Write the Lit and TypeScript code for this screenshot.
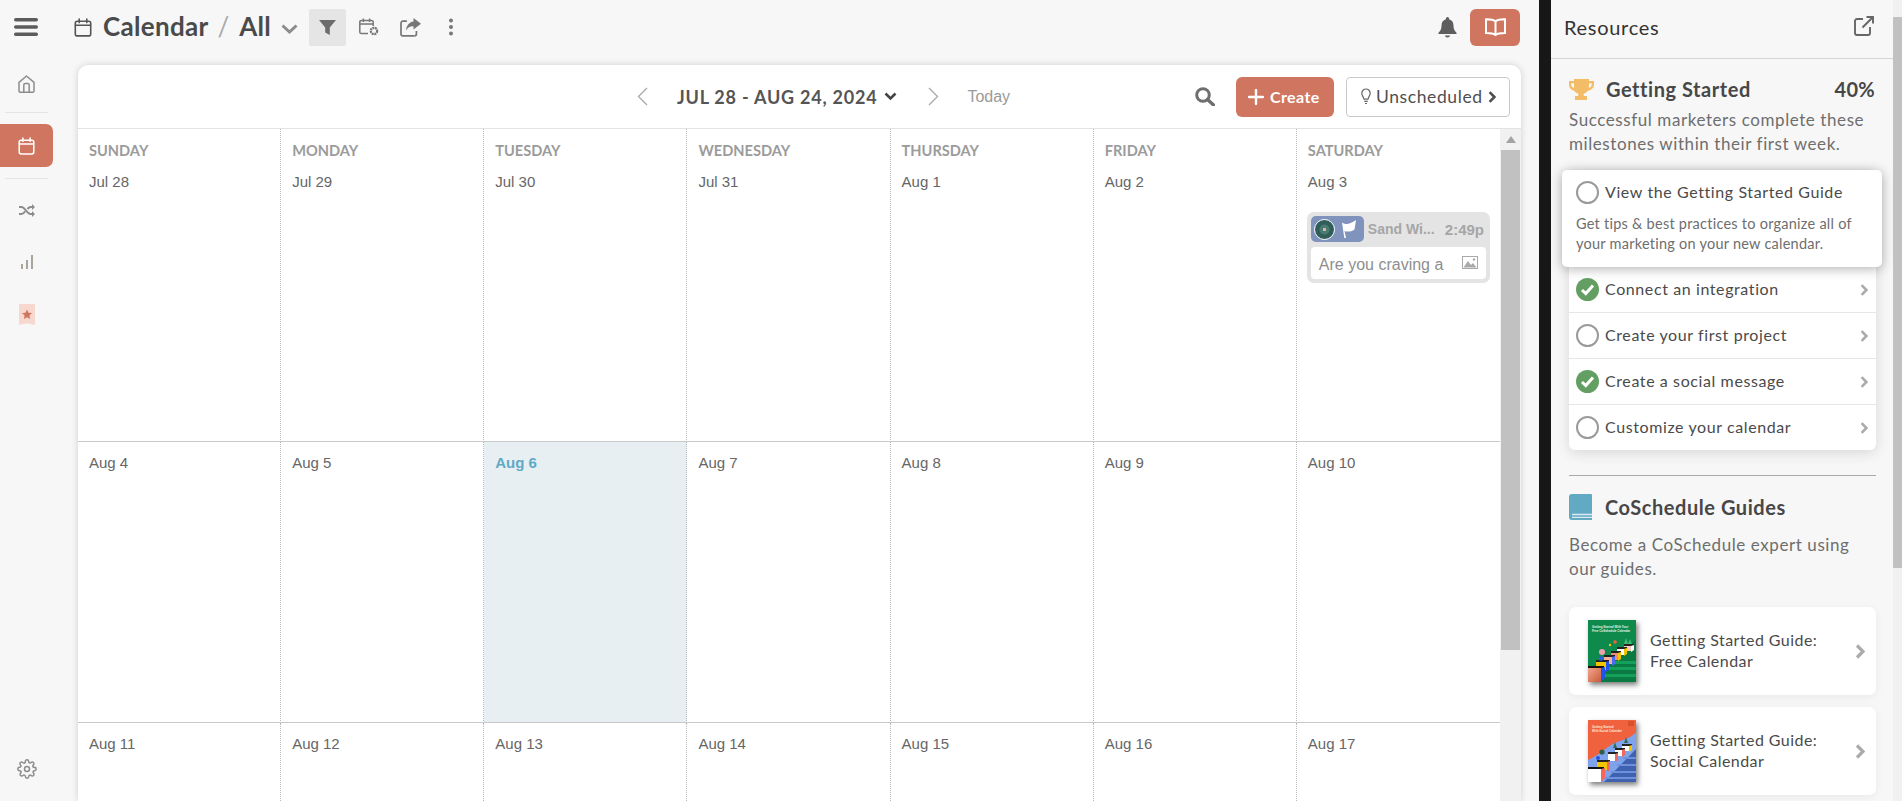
import { LitElement, html, css, svg } from "lit";
import { customElement } from "lit/decorators.js";

const ic = (w: number, h: number, vb: string, body: unknown, cls = "") =>
  html`<svg class="ic ${cls}" width=${w} height=${h} viewBox=${vb} aria-hidden="true">${body}</svg>`;

const calIcon = (w: number, h: number) =>
  ic(w, h, "0 0 18 19", svg`<g fill="none" stroke="currentColor" stroke-width="1.6" stroke-linecap="round"><rect x="1.3" y="3.3" width="15.4" height="14.6" rx="2"/><path d="M1.5 7.3h15M5.2 1v3.6M12.8 1v3.6"/></g>`);

const chev = (w: number, h: number, cls = "") =>
  ic(w, h, "0 0 8 12", svg`<path d="M1.6 1.2 6.4 6 1.6 10.8" fill="none" stroke="currentColor" stroke-width="2.6"/>`, cls);

const emptyCircle = html`<span class="circle"></span>`;
const doneCircle = html`<span class="circle done">${ic(15, 13, "0 0 15 13", svg`<path d="M2 7l3.8 3.6L13 2.6" fill="none" stroke="#fff" stroke-width="3"/>`)}</span>`;

const thumbGreen = html`<svg class="thumb" width="48" height="62" viewBox="0 0 48 62" aria-hidden="true">
  <defs><linearGradient id="gp" x1="0" y1="0" x2="1" y2="1"><stop offset="0" stop-color="#f3a68c"/><stop offset="1" stop-color="#c85a3c"/></linearGradient></defs>
  <rect width="48" height="62" fill="#0e8a4d"/>
  <path d="M0 62V49L48 20V62Z" fill="#0b7a42"/>
  <g fill="#14a05a"><path d="M26 41h22v3H21ZM18 47h30v3H13ZM12 54h36v3H10Z"/></g>
  <text x="4" y="8" font-size="3" font-weight="700" fill="#e6f5ea" font-family="Liberation Sans">Getting Started With Your</text>
  <text x="4" y="12" font-size="3" font-weight="700" fill="#e6f5ea" font-family="Liberation Sans">Free CoSchedule Calendar</text>
  <path d="M36 24h10v2H36Z" fill="#222"/><path d="M36 26h7v5h-7Z" fill="#f6c9b8"/><path d="M43 26l3-1v5l-3 2Z" fill="#fff"/>
  <path d="M29 27h10v2H29Z" fill="#222"/><path d="M29 29h7v6h-7Z" fill="#fff"/><path d="M36 29l3-1v6l-3 2Z" fill="#f4c400"/>
  <path d="M23 31h10v2H23Z" fill="#222"/><path d="M23 33h7v7h-7Z" fill="#f08a7a"/><path d="M30 33l3-1v7l-3 2Z" fill="#f4c400"/>
  <path d="M16 35h11v2H16Z" fill="#222"/><path d="M16 37h8v7h-8Z" fill="#f6b09c"/><path d="M24 37l3-1v8l-3 2Z" fill="#4a6cf0"/>
  <path d="M8 40h13v2H8Z" fill="#222"/><path d="M8 42h10v8H8Z" fill="#f4c400"/><path d="M18 42l3-1v9l-3 2Z" fill="#1f55e8"/>
  <path d="M0 46h16v2H0Z" fill="#111"/><path d="M0 48h13v14H0Z" fill="url(#gp)"/><path d="M13 48l4-1v11l-4 4Z" fill="#1f55e8"/>
  <circle cx="14" cy="32" r="3" fill="#f2a0b0"/><circle cx="13" cy="38.500" r="2.200" fill="#2a60e0"/>
  <circle cx="27" cy="22" r="1.800" fill="#f0643c"/><circle cx="22" cy="25" r="1.200" fill="#f4c400"/><path d="M36 24l2-6 2 6ZM40 24l2-5 2 5Z" fill="#3fbf74"/>
</svg>`;

const thumbOrange = html`<svg class="thumb" width="48" height="62" viewBox="0 0 48 62" aria-hidden="true">
  <rect width="48" height="62" fill="#f0623e"/>
  <path d="M0 40C14 34 20 24 32 21 38 19 44 17 48 12V62H0Z" fill="#7fa2ec"/>
  <path d="M16 62 48 29V62Z" fill="#3f62b0"/>
  <g fill="#6f90dc"><path d="M36 37h12v2H34ZM30 44h18v2H28ZM24 51h24v2H22ZM18 57h30v2H16Z"/></g>
  <text x="4" y="8" font-size="3" font-weight="700" fill="#ffe9df" font-family="Liberation Sans">Getting Started</text>
  <text x="4" y="12" font-size="3" font-weight="700" fill="#ffe9df" font-family="Liberation Sans">With Social Calendar</text>
  <rect x="40" y="1" width="6" height="5" fill="#d8502e"/>
  <path d="M34 24h10v2H34Z" fill="#222"/><path d="M34 26h7v5h-7Z" fill="#fff"/><path d="M41 26l3-1v5l-3 2Z" fill="#f4c400"/>
  <path d="M27 28h10v2H27Z" fill="#222"/><path d="M27 30h7v6h-7Z" fill="#fff"/><path d="M34 30l3-1v6l-3 2Z" fill="#f4685c"/>
  <path d="M20 32h10v2H20Z" fill="#222"/><path d="M20 34h7v7h-7Z" fill="#fff"/><path d="M27 34l3-1v7l-3 2Z" fill="#f4685c"/>
  <path d="M9 40h13v2H9Z" fill="#222"/><path d="M9 42h10v8H9Z" fill="#f4c400"/><path d="M19 42l3-1v9l-3 2Z" fill="#f4685c"/>
  <path d="M0 47h16v2H0Z" fill="#111"/><path d="M0 49h13v13H0Z" fill="#fff"/><path d="M13 49l4-1v10l-4 4Z" fill="#f4685c"/>
  <circle cx="14" cy="32" r="2.600" fill="#2f5f4a"/><circle cx="10" cy="38" r="2" fill="#2a50e0"/>
  <path d="M25 28l2-6 2 6ZM36 23l2-6 2 6Z" fill="#2f6d55"/>
</svg>`;

const weeks = [
  ["Jul 28", "Jul 29", "Jul 30", "Jul 31", "Aug 1", "Aug 2", "Aug 3"],
  ["Aug 4", "Aug 5", "Aug 6", "Aug 7", "Aug 8", "Aug 9", "Aug 10"],
  ["Aug 11", "Aug 12", "Aug 13", "Aug 14", "Aug 15", "Aug 16", "Aug 17"],
];
const days = ["SUNDAY", "MONDAY", "TUESDAY", "WEDNESDAY", "THURSDAY", "FRIDAY", "SATURDAY"];

@customElement("app-root")
export class AppRoot extends LitElement {
  static styles = css`
    :host { display: block; height: 100vh; overflow: hidden; font-family: Lato, "Open Sans", sans-serif; color: #4a4a4a; }
    * { box-sizing: border-box; }
    .ic { display: block; flex: none; }
    .app { display: flex; height: 801px; background: #f7f7f7; }
    .main { width: 1539px; flex: none; display: flex; flex-direction: column; }
    .gutter { width: 12px; flex: none; background: #171717; }
    .aside { width: 342px; flex: none; height: 801px; overflow: hidden; }
    .pagebar { width: 9px; flex: none; background: #f1f1f1; padding-top: 17px; }
    .pagebar div { height: 551px; background: #c1c1c1; }

    .top { height: 65px; flex: none; display: flex; align-items: center; padding: 0 19px 11px 14px; color: #4a4a4a; }
    .burger { color: #5c5c5c; margin-right: 36px; }
    .crumbcal { color: #555; margin-right: 11px; }
    .title { font-size: 26px; font-weight: 700; letter-spacing: .3px; line-height: 37px; color: #4a4a4a; margin-top: -2px; }
    .slash { font-size: 26px; color: #aaa; margin: -2px 10px 0 9px; line-height: 37px; font-weight: 400; }
    .drop { color: #8c8c8c; margin: 3px 11px 0 10px; }
    .filter { width: 37px; height: 37px; background: #e5e5e5; border-radius: 2px; display: flex; align-items: center; justify-content: center; color: #6c6c6c; margin-right: 13px; }
    .topi { color: #777; }
    .g21 { width: 21px; flex: none; }
    .g27 { width: 27px; flex: none; }
    .spacer { flex: 1; }
    .bell { color: #5e5e5e; margin-right: 13px; }
    .bookbtn { width: 50px; height: 37px; background: #d07660; border-radius: 6px; color: #fff; display: flex; align-items: center; justify-content: center; }

    .body { flex: 1; display: flex; min-height: 0; }
    .side { width: 78px; flex: none; display: flex; flex-direction: column; color: #8d8d8d; padding-right: 25px; }
    .side-i { display: flex; justify-content: center; }
    .s-home { padding-top: 10px; height: 47px; }
    .s-shuf { padding-top: 25px; height: 76px; }
    .s-bars { height: 49px; color: #a9a49c; }
    .side-g { height: 11px; flex: none; }
    .side-d { height: 1px; background: #e4e4e4; margin: 0 5px; }
    .side-on { height: 43px; background: #d07660; border-radius: 0 7px 7px 0; color: #fff; display: flex; align-items: center; justify-content: center; }
    .gear { margin-top: auto; margin-bottom: 22px; }

    .panel { width: 1443px; flex: none; background: #fff; border-radius: 10px 10px 0 0; box-shadow: 0 0 7px rgba(0,0,0,.16); display: flex; flex-direction: column; }
    .bar { height: 64px; flex: none; border-bottom: 1px solid #e3e3e3; display: flex; align-items: center; padding: 0 11px 0 559px; }
    .nav { color: #a8a8a8; }
    .range { font-size: 18px; font-weight: 700; color: #555; margin-left: 29px; letter-spacing: .77px; white-space: nowrap; }
    .rdrop { color: #444; margin: 0 31px 0 7px; }
    .today { font-family: "Liberation Sans", sans-serif; font-size: 16px; color: #9a9a9a; margin-left: 28px; }
    .search { color: #6e6e6e; margin-right: 21px; }
    .create { width: 98px; height: 40px; border-radius: 6px; background: #d07660; color: #fff; display: flex; align-items: center; padding-left: 12px; font-size: 16px; font-weight: 700; letter-spacing: .4px; gap: 6px; margin-right: 12px; }
    .unsched { width: 164px; height: 40px; border: 1px solid #c9c9c9; border-radius: 4px; display: flex; align-items: center; padding-left: 14px; font-size: 17.5px; letter-spacing: .6px; color: #4f4f4f; background: #fff; white-space: nowrap; }
    .bulb { margin-right: 5px; color: #666; }
    .unchev { color: #4f4f4f; margin-left: 5px; }

    .cal { flex: 1; display: flex; min-height: 0; }
    .grid { flex: 1; display: grid; grid-template-columns: repeat(7, 1fr); grid-template-rows: 313px 281px 1fr; }
    .bar-r { width: 21px; flex: none; background: #f1f1f1; position: relative; padding: 21px 1px 0; }
    .bar-r .thumbv { height: 500px; background: #c1c1c1; }
    .bar-r .up { position: absolute; top: 7px; left: 6px; width: 0; height: 0; border: 5px solid transparent; border-bottom: 7px solid #a3a3a3; border-top: 0; }
    .cell { border-right: 1px dotted #b9b9b9; border-bottom: 1px solid #c9c9c9; padding: 13px 11px 0; min-width: 0; font-family: "Liberation Sans", sans-serif; }
    .cell.last { border-right: 0; }
    .cell.r3 { border-bottom: 0; }
    .cell.now { background: #e7eff2; }
    .wk { font-family: Lato, sans-serif; font-size: 14.6px; font-weight: 700; color: #9b9b9b; line-height: 18px; margin: 0 0 14px; }
    .date { font-size: 15px; line-height: 16px; color: #666; padding-left: 0; }
    .now .date { font-weight: 700; color: #5eaac6; }
    .ev { margin: 22px -1px 0; height: 71px; background: #e4e4e4; border-radius: 7px; padding: 4px; }
    .ev-top { display: flex; align-items: center; height: 26px; }
    .chip { width: 53px; height: 26px; border-radius: 5px; background: #7f93bd; display: flex; align-items: center; padding-left: 3px; gap: 6px; flex: none; }
    .avatar { width: 21px; height: 21px; border-radius: 50%; border: 1.5px solid #fff; background: radial-gradient(circle, #d7b7a5 0 12%, #4a7a72 14% 35%, #2f5d58 40%); flex: none; }
    .ev-name { font-family: "Liberation Sans", sans-serif; font-size: 14px; font-weight: 700; color: #a6a6a6; margin-left: 4px; white-space: nowrap; flex: 1; }
    .ev-time { font-family: "Liberation Sans", sans-serif; font-size: 15px; font-weight: 700; color: #a6a6a6; margin-right: 2px; }
    .ev-box { margin-top: 5px; height: 32px; border-radius: 4px; background: #fff; display: flex; align-items: center; padding: 3px 8px 0; justify-content: space-between; font-size: 16px; color: #8e8e8e; }
    .ev-img { color: #a9a9a9; margin-top: -4px; }

    .rhead { height: 59px; border-bottom: 1px solid #d4d4d4; display: flex; align-items: center; justify-content: space-between; padding: 0 19px 5px 13px; font-size: 20px; letter-spacing: .7px; color: #333; }
    .rext { color: #666; margin-top: -2px; }
    .sec { padding: 0 17px 0 18px; }
    .h { display: flex; align-items: center; }
    .h1 { height: 24px; margin-top: 18px; }
    .htext { font-size: 20px; font-weight: 700; color: #474747; margin-left: 13px; letter-spacing: .55px; }
    .h1 .htext { margin-left: 12px; }
    .pct { margin-left: auto; font-size: 20px; font-weight: 700; color: #474747; margin-right: 1px; letter-spacing: .3px; }
    .desc { font-size: 17px; line-height: 24px; color: #6e6e6e; margin: 7px 0 0 0; letter-spacing: .58px; }
    .check { position: relative; margin-top: 14px; }
    .pop { position: absolute; left: -7px; right: -6px; top: 0; height: 97px; background: #fff; border-radius: 5px; box-shadow: 0 2px 12px rgba(0,0,0,.3); padding: 11px 14px 0; }
    .pop-t { display: flex; align-items: center; gap: 6px; font-size: 16px; color: #4a4a4a; letter-spacing: .6px; }
    .pop-t span + span { margin-top: -2px; }
    .pop-d { margin: 10px 0 0; font-size: 14.5px; line-height: 20px; color: #6e6e6e; letter-spacing: .25px; }
    .list { background: #fff; border-radius: 6px; padding-top: 97px; box-shadow: 0 3px 14px rgba(0,0,0,.13); }
    .row { height: 46px; border-bottom: 1px solid #e6e6e6; display: flex; align-items: center; padding: 0 8px 0 7px; gap: 6px; font-size: 16px; color: #4a4a4a; letter-spacing: .6px; }
    .row span + span { margin-top: -2px; }
    .row:last-child { border-bottom: 0; height: 45px; }
    .row .go { margin-left: auto; color: #ababab; }
    .circle { width: 23px; height: 23px; border-radius: 50%; border: 2px solid #9a9a9a; flex: none; display: flex; align-items: center; justify-content: center; }
    .circle.done { background: #639f63; border: 0; }
    .hr { height: 1px; background: #aaa; margin-top: 25px; }
    .h2 { height: 26px; margin-top: 18px; }
    .d2 { margin-top: 13px; }
    .cards { margin-top: 26px; display: flex; flex-direction: column; gap: 12px; }
    .card { height: 88px; background: #fff; border-radius: 7px; box-shadow: 0 2px 10px rgba(0,0,0,.06); display: flex; align-items: center; padding: 0 11px 0 19px; }
    .thumb { display: block; flex: none; box-shadow: 2px 3px 5px rgba(0,0,0,.5); }
    .card-t { margin: -2px 0 0 14px; font-size: 16px; line-height: 21px; color: #4a4a4a; flex: 1; letter-spacing: .45px; }
    .card .go { color: #ababab; }
  `;

  render() {
    return html`<div class="app">
      <div class="main">
        <header class="top">
          ${ic(24, 18, "0 0 24 18", svg`<g fill="currentColor"><rect width="24" height="3.4" rx="1.7"/><rect y="7.3" width="24" height="3.4" rx="1.7"/><rect y="14.6" width="24" height="3.4" rx="1.7"/></g>`, "burger")}
          <span class="crumbcal">${calIcon(18, 19)}</span>
          <span class="title">Calendar</span><span class="slash">/</span><span class="title">All</span>
          ${ic(17, 10, "0 0 17 10", svg`<path d="M1.5 1.5 8.5 8l7-6.5" fill="none" stroke="currentColor" stroke-width="3"/>`, "drop")}
          <span class="filter">${ic(17, 15, "0 0 17 15", svg`<path d="M0 0h17l-6.2 7.4V15L6.2 12.6V7.4Z" fill="currentColor"/>`)}</span>
          ${ic(20, 18, "0 0 20 18", svg`<g fill="none" stroke="currentColor" stroke-width="1.5"><path d="M9 15.5H2.4a1.6 1.6 0 0 1-1.6-1.6V4a1.6 1.6 0 0 1 1.6-1.6h10.2A1.6 1.6 0 0 1 14.2 4v4M1 6h13M4.4 .5v3.4M10.6 .5v3.4"/></g><circle cx="15" cy="13" r="3.2" fill="none" stroke="currentColor" stroke-width="2.2" stroke-dasharray="2 .6"/>`, "topi")}
          <span class="g21"></span>
          ${ic(21, 19, "0 0 21 19", svg`<path d="M14.5 17.8H2.9A1.9 1.9 0 0 1 1 15.9V5.1a1.9 1.9 0 0 1 1.9-1.9h4" fill="none" stroke="currentColor" stroke-width="1.7"/><path d="M14.5 17.8a1.9 1.9 0 0 0 1.9-1.9v-3" fill="none" stroke="currentColor" stroke-width="1.7"/><path d="M13.5 0 21 5.8l-7.5 5.8V8.2C10 8.1 7.6 9.5 6 12.6 6.2 8 9 3.9 13.5 3.4Z" fill="currentColor"/>`, "topi")}
          <span class="g27"></span>
          ${ic(6, 18, "0 0 6 18", svg`<g fill="currentColor"><circle cx="3" cy="2.5" r="2"/><circle cx="3" cy="9" r="2"/><circle cx="3" cy="15.5" r="2"/></g>`, "topi")}
          <span class="spacer"></span>
          ${ic(19, 21, "0 0 19 21", svg`<path d="M9.5 0a1.6 1.6 0 0 1 1.6 1.6v.7c3 .8 4.4 3.3 4.4 6.4 0 3.4 1 5.2 3 7V17H.5v-1.3c2-1.8 3-3.6 3-7 0-3.1 1.4-5.6 4.4-6.4v-.7A1.6 1.6 0 0 1 9.5 0ZM6.8 18.4h5.4a2.8 2.8 0 0 1-5.4 0Z" fill="currentColor"/>`, "bell")}
          <span class="bookbtn">${ic(21, 19, "0 0 21 19", svg`<g fill="none" stroke="currentColor" stroke-width="2"><path d="M10.5 3.4C8.6 1.8 5.500 1.200 1 1.300v13.700c4.500 0 7.600.4 9.500 2 1.900-1.600 5-2 9.500-2V1.300c-4.500-.1-7.600.5-9.500 2.100Zm0 0V17"/></g>`)}</span>
        </header>
        <div class="body">
          <nav class="side">
            <div class="side-i s-home">${ic(17, 18, "0 0 17 18", svg`<g fill="none" stroke="currentColor" stroke-width="1.5" stroke-linejoin="round"><path d="M1 7.400 8.500 1 16 7.400V16a1.300 1.300 0 0 1-1.300 1.300H2.300A1.300 1.300 0 0 1 1 16Z"/><path d="M5.800 17.200V10a1.500 1.500 0 0 1 1.500-1.500h2.400a1.500 1.500 0 0 1 1.500 1.500v7.200"/></g>`)}</div>
            <div class="side-d"></div>
            <div class="side-g"></div>
            <div class="side-on">${calIcon(17, 18)}</div>
            <div class="side-g"></div>
            <div class="side-d"></div>
            <div class="side-i s-shuf">${ic(16, 13, "0 0 16 13", svg`<g fill="none" stroke="currentColor" stroke-width="2"><path d="M0 3h2.500c3.500 0 5.500 7 9 7H14M0 10h2.500c1.500 0 2.600-1.200 3.700-2.600M8.500 5c.9-1.100 1.800-2 3-2H14"/></g><path d="M13 0l3 3-3 3ZM13 7l3 3-3 3Z" fill="currentColor"/>`)}</div>
            <div class="side-i s-bars">${ic(12, 14, "0 0 12 14", svg`<g fill="currentColor"><rect y="9" width="2" height="5"/><rect x="5" y="5" width="2" height="9"/><rect x="10" width="2" height="14"/></g>`)}</div>
            <div class="side-i">${ic(16, 21, "0 0 16 21", svg`<path d="M0 0h16v21l-8-1.800L0 21Z" fill="#f6d8ce"/><path d="M8 5.500 9.500 8.700l3.500.4-2.600 2.400.7 3.500L8 13.300 4.900 15l.7-3.500L3 9.100l3.500-.4Z" fill="#d07660"/>`)}</div>
            <div class="side-i gear">${ic(20, 20, "0 0 24 24", svg`<g fill="none" stroke="currentColor" stroke-width="1.800" stroke-linejoin="round"><circle cx="12" cy="12" r="3"/><path d="M19.400 15a1.650 1.650 0 0 0 .33 1.820l.06.06a2 2 0 1 1-2.830 2.830l-.06-.06a1.650 1.650 0 0 0-2.800 1.170V21a2 2 0 0 1-4 0v-.09A1.650 1.650 0 0 0 9 19.400a1.650 1.650 0 0 0-1.820.33l-.06.06a2 2 0 1 1-2.830-2.830l.06-.06A1.650 1.650 0 0 0 3 14H3a2 2 0 0 1 0-4h.09A1.650 1.650 0 0 0 4.600 9a1.650 1.650 0 0 0-.33-1.820l-.06-.06a2 2 0 1 1 2.830-2.830l.06.06A1.650 1.650 0 0 0 10 3V3a2 2 0 0 1 4 0v.09a1.650 1.650 0 0 0 2.800 1.170l.06-.06a2 2 0 1 1 2.830 2.830l-.06.06A1.650 1.650 0 0 0 21 10h0a2 2 0 0 1 0 4h-.09a1.650 1.650 0 0 0-1.510 1Z"/></g>`)}</div>
          </nav>
          <section class="panel">
            <div class="bar">
              ${ic(11, 19, "0 0 11 19", svg`<path d="M10 1 1.500 9.500 10 18" fill="none" stroke="currentColor" stroke-width="1.300"/>`, "nav")}
              <span class="range">JUL 28 - AUG 24, 2024</span>
              ${ic(13, 9, "0 0 13 9", svg`<path d="M1.500 1.500 6.500 6.500l5-5" fill="none" stroke="currentColor" stroke-width="2.600"/>`, "rdrop")}
              ${ic(11, 19, "0 0 11 19", svg`<path d="M1 1l8.500 8.500L1 18" fill="none" stroke="currentColor" stroke-width="1.300"/>`, "nav")}
              <span class="today">Today</span>
              <span class="spacer"></span>
              ${ic(20, 19, "0 0 20 19", svg`<circle cx="8" cy="8" r="6.300" fill="none" stroke="currentColor" stroke-width="3"/><path d="M12.500 12.500 18.500 18" stroke="currentColor" stroke-width="3.400" stroke-linecap="round"/>`, "search")}
              <span class="create">${ic(16, 16, "0 0 16 16", svg`<path d="M8 1v14M1 8h14" stroke="currentColor" stroke-width="2.400" stroke-linecap="round"/>`)}Create</span>
              <span class="unsched">
                ${ic(10, 17, "0 0 10 17", svg`<path d="M5 1a4.200 4.200 0 0 0-4.200 4.200c0 2.300 1.700 3.500 2.200 6h4c.5-2.500 2.200-3.700 2.200-6A4.200 4.200 0 0 0 5 1ZM3.200 13.300h3.600M4 15.500h2" fill="none" stroke="currentColor" stroke-width="1.200"/>`, "bulb")}
                Unscheduled
                ${chev(8, 12, "unchev")}
              </span>
            </div>
            <div class="cal">
              <div class="grid">
                ${weeks.map((w, r) => w.map((d, c) => html`
                  <div class="cell ${c === 6 ? "last" : ""} ${r === 2 ? "r3" : ""} ${d === "Aug 6" ? "now" : ""}">
                    ${r === 0 ? html`<div class="wk">${days[c]}</div>` : ""}
                    <div class="date">${d}</div>
                    ${d === "Aug 3" ? html`<div class="ev">
                      <div class="ev-top">
                        <span class="chip"><span class="avatar"></span>${ic(15, 18, "0 0 15 18", svg`<path d="M1 2.500C4.500 5 8.500 4.500 15 0L13.500 9.500C10 12 6 12 3.500 11L5 18H3.300Z" fill="#fff"/>`)}</span>
                        <span class="ev-name">Sand Wi...</span>
                        <span class="ev-time">2:49p</span>
                      </div>
                      <div class="ev-box"><span>Are you craving a</span>${ic(16, 13, "0 0 16 13", svg`<rect x=".5" y=".5" width="15" height="12" fill="none" stroke="currentColor"/><path d="M1.500 11.500 6 5l3 4 2-2 3.500 4.500Z" fill="currentColor"/><circle cx="12" cy="3.500" r="1.200" fill="currentColor"/>`, "ev-img")}</div>
                    </div>` : ""}
                  </div>`))}
              </div>
              <div class="bar-r"><span class="up"></span><div class="thumbv"></div></div>
            </div>
          </section>
        </div>
      </div>
      <div class="gutter"></div>
      <aside class="aside">
        <div class="rhead"><span>Resources</span>${ic(20, 20, "0 0 20 20", svg`<g fill="none" stroke="currentColor" stroke-width="1.900"><path d="M9 3H3a2 2 0 0 0-2 2v12a2 2 0 0 0 2 2h11a2 2 0 0 0 2-2v-6"/><path d="M12.500 1H19v6.500M19 1 8.500 11.500"/></g>`, "rext")}</div>
        <div class="sec">
          <div class="h h1">
            ${ic(25, 21, "0 0 25 21", svg`<path d="M5 0h15v2h5v3.500c0 3.600-3 5.700-6.200 6.200-1 1.500-2.400 2.400-4 2.800V17h3.200v4H6v-4h3.200v-2.500c-1.600-.4-3-1.300-4-2.800C2 11.200 0 9.100 0 5.500V2h5Zm-2.800 4.200v1.300c0 1.800 1.200 3 3 3.600C5.100 7.800 5 6 5 4.200Zm17.800 0c0 1.800-.1 3.600-.3 4.900 1.800-.6 3-1.800 3-3.600V4.200Z" fill="#f3bc66"/>`)}
            <span class="htext">Getting Started</span><span class="pct">40%</span>
          </div>
          <p class="desc">Successful marketers complete these milestones within their first week.</p>
          <div class="check">
            <div class="list">
              <div class="row">${doneCircle}<span>Connect an integration</span>${chev(8, 12, "go")}</div>
              <div class="row">${emptyCircle}<span>Create your first project</span>${chev(8, 12, "go")}</div>
              <div class="row">${doneCircle}<span>Create a social message</span>${chev(8, 12, "go")}</div>
              <div class="row">${emptyCircle}<span>Customize your calendar</span>${chev(8, 12, "go")}</div>
            </div>
            <div class="pop">
              <div class="pop-t">${emptyCircle}<span>View the Getting Started Guide</span></div>
              <p class="pop-d">Get tips &amp; best practices to organize all of your marketing on your new calendar.</p>
            </div>
          </div>
          <div class="hr"></div>
          <div class="h h2">
            ${ic(23, 26, "0 0 23 26", svg`<path d="M3 0h19a1 1 0 0 1 1 1v25H3a3 3 0 0 1-3-3V3a3 3 0 0 1 3-3Z" fill="#62aac4"/><path d="M3 20.500h20M3 23.300h20" stroke="#dcebf1" stroke-width="1.300"/>`)}
            <span class="htext">CoSchedule Guides</span>
          </div>
          <p class="desc d2">Become a CoSchedule expert using our guides.</p>
          <div class="cards">
            <div class="card">${thumbGreen}<span class="card-t">Getting Started Guide:<br />Free Calendar</span>${chev(10, 15, "go")}</div>
            <div class="card">${thumbOrange}<span class="card-t">Getting Started Guide:<br />Social Calendar</span>${chev(10, 15, "go")}</div>
          </div>
        </div>
      </aside>
      <div class="pagebar"><div></div></div>
    </div>`;
  }
}
